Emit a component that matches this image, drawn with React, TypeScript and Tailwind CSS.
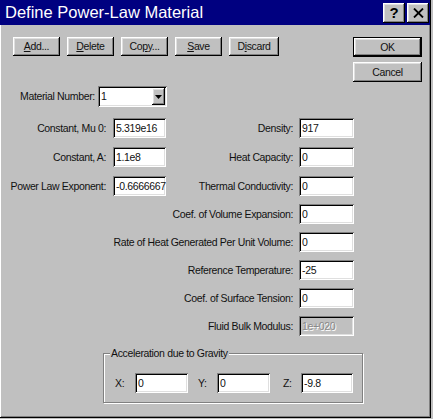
import React from "react";

const raised =
  "bg-[#c0c0c0] shadow-[inset_-1px_-1px_#000000,inset_1px_1px_#ffffff,inset_-2px_-2px_#808080,inset_2px_2px_#dfdfdf]";
const sunken =
  "shadow-[inset_1px_1px_#808080,inset_-1px_-1px_#ffffff,inset_2px_2px_#000000,inset_-2px_-2px_#dfdfdf]";

function Field({
  value,
  className,
  disabled,
}: {
  value: string;
  className: string;
  disabled?: boolean;
}) {
  return (
    <div
      className={`${sunken} ${className} ${
        disabled
          ? "bg-[#c0c0c0] text-[#8a8a8a] [text-shadow:1px_1px_#ffffff]"
          : "bg-white text-[#111111]"
      } h-[20px] shrink-0 flex items-center pl-[3px] overflow-hidden whitespace-nowrap`}
    >
      {value}
    </div>
  );
}

function Btn({
  children,
  className,
}: {
  children: React.ReactNode;
  className: string;
}) {
  return (
    <div
      className={`${raised} ${className} h-[19px] flex items-center justify-center`}
    >
      {children}
    </div>
  );
}

type Row = {
  left?: { label: string; value: string };
  label: string;
  value: string;
  disabled?: boolean;
  mt: string;
};

const rows: Row[] = [
  {
    left: { label: "Constant, Mu 0:", value: "5.319e16" },
    label: "Density:",
    value: "917",
    mt: "mt-[11px]",
  },
  {
    left: { label: "Constant, A:", value: "1.1e8" },
    label: "Heat Capacity:",
    value: "0",
    mt: "mt-[9px]",
  },
  {
    left: { label: "Power Law Exponent:", value: "-0.6666667" },
    label: "Thermal Conductivity:",
    value: "0",
    mt: "mt-[9px]",
  },
  { label: "Coef. of Volume Expansion:", value: "0", mt: "mt-[8px]" },
  {
    label: "Rate of Heat Generated Per Unit Volume:",
    value: "0",
    mt: "mt-[8px]",
  },
  { label: "Reference Temperature:", value: "-25", mt: "mt-[8px]" },
  { label: "Coef. of Surface Tension:", value: "0", mt: "mt-[8px]" },
  {
    label: "Fluid Bulk Modulus:",
    value: "1e+020",
    disabled: true,
    mt: "mt-[8px]",
  },
];

export default function App() {
  return (
    <div className="w-[433px] h-[419px] bg-[#c0c0c0] pr-[2px] pb-[1px] font-['Liberation_Sans',Arial,sans-serif] text-[10.5px] tracking-[-0.35px] leading-none text-[#111111] select-none">
      <div className="w-full h-full flex flex-col border-r border-b border-[#000000]">
        {/* Title bar */}
        <div className="h-[25px] bg-[#000080] flex items-center justify-between pl-[5px]">
          <span className="text-white text-[16.5px] tracking-normal">
            Define Power-Law Material
          </span>
          <div className="flex gap-[2px] mr-[1px]">
            <div
              className={`${raised} w-[22px] h-[20px] flex items-center justify-center text-[15px] font-bold tracking-normal text-black`}
            >
              ?
            </div>
            <div
              className={`${raised} w-[22px] h-[20px] flex items-center justify-center`}
            >
              <svg width="11" height="10" viewBox="0 0 11 10">
                <path
                  d="M1 0.5 L10 9.5 M10 0.5 L1 9.5"
                  stroke="#000"
                  strokeWidth="1.8"
                  fill="none"
                />
              </svg>
            </div>
          </div>
        </div>

        {/* Body */}
        <div className="flex-1 flex flex-col pt-[12px] shadow-[inset_1px_0_#ffffff,inset_-1px_-1px_#808080]">
          {/* header: buttons + OK/Cancel */}
          <div className="flex justify-between items-start">
            <div className="flex gap-[7px] pl-[13px]">
              <Btn className="w-[47px]">
                <span>
                  <u>A</u>dd...
                </span>
              </Btn>
              <Btn className="w-[47px]">
                <span>
                  <u>D</u>elete
                </span>
              </Btn>
              <Btn className="w-[47px]">
                <span>
                  Co<u>p</u>y...
                </span>
              </Btn>
              <Btn className="w-[47px]">
                <span>
                  <u>S</u>ave
                </span>
              </Btn>
              <Btn className="w-[50px]">
                <span>
                  D<u>i</u>scard
                </span>
              </Btn>
            </div>
            <div className="flex flex-col gap-[5px] mr-[8px]">
              <div
                className={`${raised} border border-black w-[69px] h-[20px] flex items-center justify-center`}
              >
                OK
              </div>
              <div
                className={`${raised} w-[69px] h-[20px] flex items-center justify-center`}
              >
                Cancel
              </div>
            </div>
          </div>

          {/* Material number */}
          <div className="flex items-center mt-[4px] h-[21px]">
            <div className="w-[98px] pl-[20px] whitespace-nowrap">
              Material Number:
            </div>
            <div
              className={`${sunken} bg-white w-[69px] h-[21px] flex items-center pl-[3px] pr-[2px]`}
            >
              <span className="flex-1">1</span>
              <div
                className={`${raised} w-[13px] h-[17px] flex items-center justify-center`}
              >
                <svg width="7" height="4" viewBox="0 0 7 4">
                  <path d="M0 0 H7 L3.5 4 Z" fill="#000" />
                </svg>
              </div>
            </div>
          </div>

          {/* Fields */}
          {rows.map((r, i) => (
            <div
              key={i}
              className={`flex w-[354px] h-[20px] items-center ${r.mt}`}
            >
              {r.left && (
                <div className="w-[166px] shrink-0 flex items-center justify-end">
                  <span className="mr-[7px] whitespace-nowrap">
                    {r.left.label}
                  </span>
                  <Field className="w-[53px]" value={r.left.value} />
                </div>
              )}
              <div className="flex-1 flex items-center justify-end">
                <span className="mr-[6px] whitespace-nowrap">{r.label}</span>
                <Field
                  className="w-[55px]"
                  value={r.value}
                  disabled={r.disabled}
                />
              </div>
            </div>
          ))}

          {/* Group box */}
          <div className="relative mt-[17px] ml-[103px] w-[260px] h-[50px] border border-[#808080] shadow-[inset_1px_1px_#ffffff,1px_1px_#ffffff] pt-[19px] pl-[11px] flex items-start">
            <span className="absolute left-[6px] top-[-6px] bg-[#c0c0c0] px-[1px] whitespace-nowrap">
              Acceleration due to Gravity
            </span>
            <div className="flex items-center">
              <span className="w-[20px]">X:</span>
              <Field className="w-[53px]" value="0" />
              <span className="w-[19px] ml-[10px]">Y:</span>
              <Field className="w-[53px]" value="0" />
              <span className="w-[18px] ml-[13px]">Z:</span>
              <Field className="w-[52px]" value="-9.8" />
            </div>
          </div>
        </div>
      </div>
    </div>
  );
}
